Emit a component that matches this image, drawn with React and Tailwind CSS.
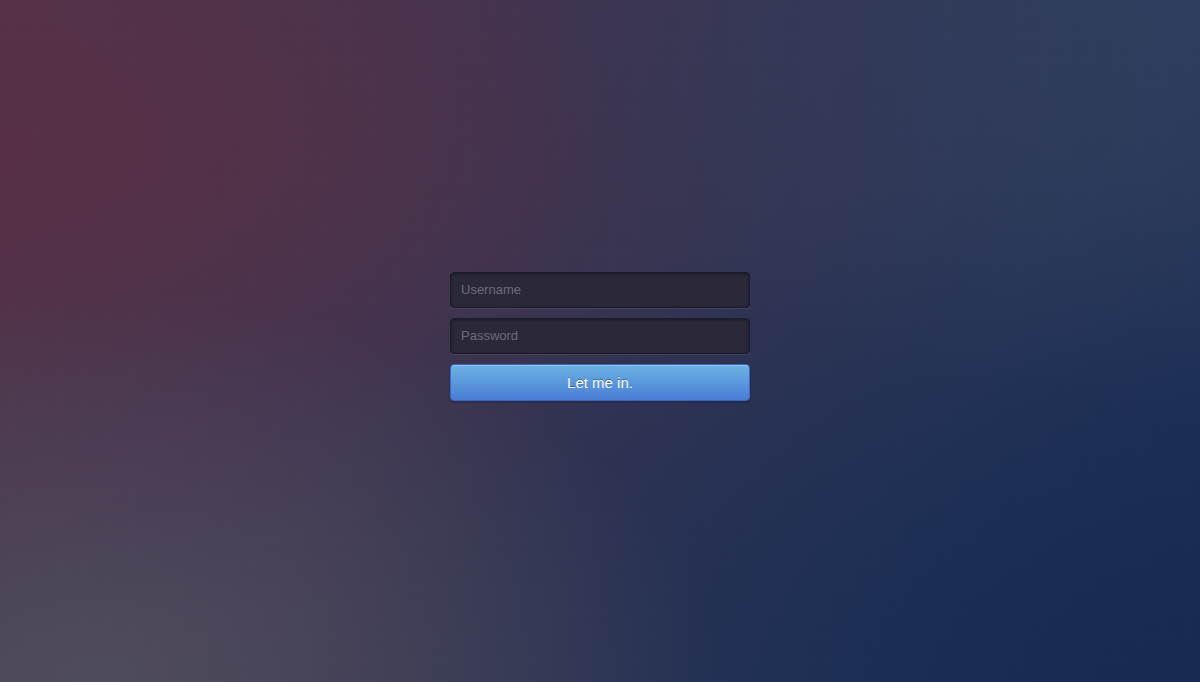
import React from "react";

const App = () => {
  return (
    <div className="relative w-full h-[682px] overflow-hidden flex items-center justify-center pb-[9px] bg-[#363351] bg-[image:radial-gradient(ellipse_at_8%_100%,rgba(80,78,94,0.95)_0%,rgba(80,78,94,0)_40%),radial-gradient(ellipse_at_0%_22%,rgba(88,48,68,0.9)_0%,rgba(88,48,68,0)_38%),radial-gradient(ellipse_at_100%_0%,rgba(48,64,96,0.85)_0%,rgba(48,64,96,0)_42%),radial-gradient(ellipse_at_100%_100%,rgba(22,42,82,1)_0%,rgba(22,42,82,0)_55%),linear-gradient(120deg,#553449_0%,#463450_28%,#383552_50%,#2b3758_75%,#1e3057_100%)]">
      {/* subtle dotted texture */}
      <div className="absolute inset-0 opacity-[0.06] bg-[image:radial-gradient(#000_0.6px,transparent_0.8px)] bg-[length:3px_3px] pointer-events-none" />

      {/* ---------- Login form ---------- */}
      <form
        onSubmit={(e) => e.preventDefault()}
        className="relative w-[300px] flex flex-col gap-[10px] font-['Liberation_Sans',Arial,sans-serif]"
      >
        <input
          type="text"
          placeholder="Username"
          className="h-[36px] w-full rounded-[4px] border border-[#1b1a28] bg-[#2a2839] px-[10px] pb-[2px] text-[13px] text-gray-200 placeholder:text-[#6e6c7a] shadow-[inset_0_1px_3px_rgba(0,0,0,0.35),0_1px_0_rgba(255,255,255,0.08)] outline-none"
        />
        <input
          type="password"
          placeholder="Password"
          className="h-[36px] w-full rounded-[4px] border border-[#1b1a28] bg-[#2a2839] px-[10px] pb-[2px] text-[13px] text-gray-200 placeholder:text-[#6e6c7a] shadow-[inset_0_1px_3px_rgba(0,0,0,0.35),0_1px_0_rgba(255,255,255,0.08)] outline-none"
        />
        <button
          type="submit"
          className="h-[37px] w-full rounded-[4px] border border-[#3b66c4] bg-gradient-to-b from-[#6db3e3] to-[#4a7cd5] pt-[1px] text-[15px] text-white [text-shadow:0_-1px_0_rgba(0,0,0,0.35)] shadow-[inset_0_1px_0_rgba(255,255,255,0.25),0_1px_2px_rgba(0,0,0,0.3)]"
        >
          Let me in.
        </button>
      </form>
    </div>
  );
};

export default App;
